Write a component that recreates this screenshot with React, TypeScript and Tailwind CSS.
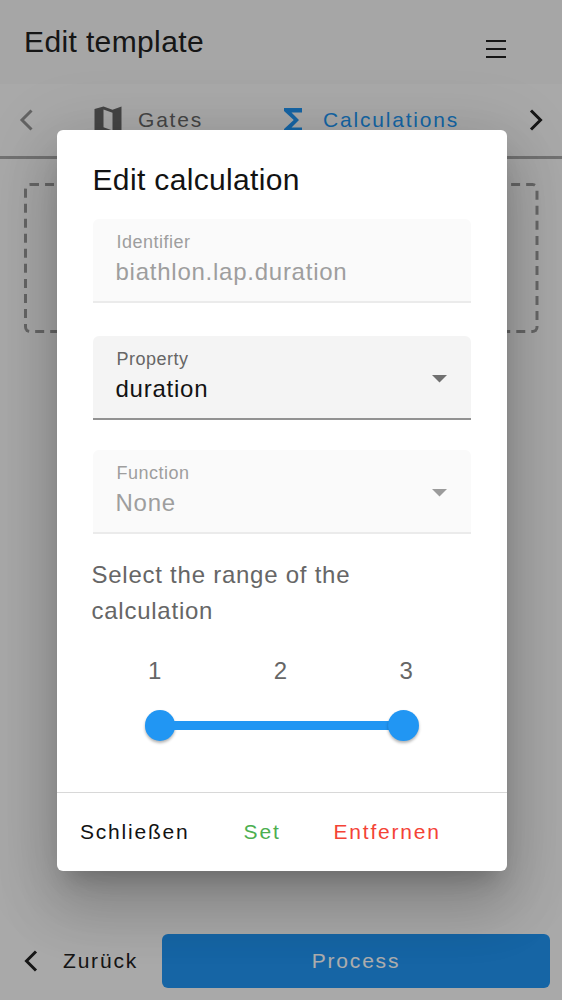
import { useState } from "react";
import type { ReactNode } from "react";
import { MdFunctions } from "react-icons/md";

const STEPS = [1, 2, 3];

type FieldProps = {
  label: string;
  value: string;
  disabled?: boolean;
  select?: boolean;
};

function Field({ label, value, disabled = false, select = false }: FieldProps) {
  return (
    <div
      className={
        disabled
          ? "flex h-[84px] items-center rounded-t-md border-b-2 border-[#ebebeb] bg-[#fafafa] px-6 text-[#9e9e9e]"
          : "flex h-[84px] items-center rounded-t-md border-b-2 border-[#929292] bg-[#f4f4f4] px-6 text-[#121212]"
      }
    >
      <div className="flex-1 pb-0.5">
        <div
          className={
            disabled
              ? "text-[18px] leading-[26px] tracking-[0.5px]"
              : "text-[18px] leading-[26px] tracking-[0.5px] text-[#666]"
          }
        >
          {label}
        </div>
        <div className="-ml-px text-2xl leading-[34px] tracking-[0.75px]">{value}</div>
      </div>
      {select && (
        <svg
          width="15"
          height="8"
          viewBox="0 0 15 8"
          className={disabled ? "mt-[3px] fill-[#9b9b9b]" : "mt-[3px] fill-[#707070]"}
        >
          <path d="M0 0h15L7.5 7.5z" />
        </svg>
      )}
    </div>
  );
}

function Chevron({ d, className }: { d: string; className: string }) {
  return (
    <svg width="16" height="24" viewBox="0 0 16 24" fill="none" strokeWidth="3" className={className}>
      <path d={d} />
    </svg>
  );
}

function MapIcon() {
  return (
    <svg width="36" height="36" viewBox="0 0 24 24" fill="currentColor">
      <path fillRule="evenodd" d="M3 4.7 9 3l6 2.1L21 3v16.2L15 21l-6-2.1L3 21zM9 5v11.9l6 2.1V7.1z" />
    </svg>
  );
}

function Tab({ icon, children }: { icon: ReactNode; children: ReactNode }) {
  return (
    <div className="flex items-center gap-3 text-[21px] tracking-[1.8px]">
      {icon}
      <span>{children}</span>
    </div>
  );
}

function Dialog() {
  const [range] = useState([1, 3]);

  return (
    <section
      role="dialog"
      aria-labelledby="dialog-title"
      className="absolute left-[57px] top-[130.4px] flex h-[740.4px] w-[449.6px] flex-col rounded-md bg-white shadow-[0_16.5px_22.5px_-10.5px_rgba(0,0,0,0.2),0_36px_57px_4.5px_rgba(0,0,0,0.14),0_13.5px_69px_12px_rgba(0,0,0,0.12)]"
    >
      <div className="flex-1 pl-[35.5px] pr-9 pt-8">
        <h2 id="dialog-title" className="text-[30px] leading-9 tracking-[0.35px] text-[#121212]">
          Edit calculation
        </h2>
        <div className="mt-[21px]">
          <Field label="Identifier" value="biathlon.lap.duration" disabled />
        </div>
        <div className="mt-[33px]">
          <Field label="Property" value="duration" select />
        </div>
        <div className="mt-[30px]">
          <Field label="Function" value="None" select disabled />
        </div>
        <p className="-ml-px mt-[23px] text-2xl leading-9 tracking-[0.75px] text-[#666]">
          Select the range of the calculation
        </p>
        <div className="mt-6 flex justify-between pl-[55.5px] pr-[57px] text-2xl leading-9 tracking-[0.75px] text-[#666]">
          {STEPS.map((step) => (
            <span key={step}>{step}</span>
          ))}
        </div>
        <div className="ml-[52px] mt-[21px] flex w-[274px] items-center" aria-label={range.join(" - ")}>
          <span className="size-[30.5px] shrink-0 rounded-full bg-[#2196f3] shadow-[0_2px_3px_rgba(0,0,0,0.3)]" />
          <span className="-mx-1 h-[9px] flex-1 bg-[#2196f3]" />
          <span className="size-[30.5px] shrink-0 rounded-full bg-[#2196f3] shadow-[0_2px_3px_rgba(0,0,0,0.3)]" />
        </div>
      </div>
      <footer className="flex h-[79px] items-center border-t border-[#d8d8d8] pl-[23px] text-[21px] tracking-[1.8px]">
        <button className="mr-[54px] text-[#121212]">Schließen</button>
        <button className="mr-[53px] text-[#4caf50]">Set</button>
        <button className="text-[#f44336]">Entfernen</button>
      </footer>
    </section>
  );
}

export default function App() {
  return (
    <div className="relative flex h-[1000px] w-[562px] flex-col overflow-hidden bg-[#fafafa] font-['Liberation_Sans',Arial,sans-serif] text-[#212121]">
      <header className="flex h-[84px] items-center justify-between bg-[#f5f5f5] pl-6 pr-14">
        <h1 className="-mt-0.5 text-[30px] tracking-[0.375px]">Edit template</h1>
        <svg width="20" height="20" viewBox="0 0 20 20" className="mt-3.5" stroke="currentColor" strokeWidth="2">
          <path d="M0 2h20M0 10h20M0 18h20" />
        </svg>
      </header>

      <nav className="flex h-[75px] items-center border-b-[3px] border-[#a8a8a8]">
        <Chevron d="M13.5 2.5 4 12l9.5 9.5" className="ml-[18px] mr-14 stroke-[#939393]" />
        <div className="w-[185px] text-[#666]">
          <Tab icon={<MapIcon />}>Gates</Tab>
        </div>
        <div className="flex-1 text-[#2196f3]">
          <Tab icon={<MdFunctions size={36} />}>Calculations</Tab>
        </div>
        <Chevron d="M3 2.5 12.5 12 3 21.5" className="mr-[18px] stroke-[#212121]" />
      </nav>

      <main className="flex-1 px-6 pt-6">
        {/* 2px dashes drawn at 1.5x, so the dash pattern scales with the outline */}
        <div className="h-[99.7px] w-[343px] origin-top-left scale-150 rounded border-2 border-dashed border-[#999]" />
      </main>

      <footer className="flex h-[66px] items-start pl-[23px] pr-3 text-[21px] tracking-[1.8px]">
        <div className="flex h-[54px] w-[139px] items-center">
          <Chevron d="M13 2.5 3.5 12l9.5 9.5" className="mr-6 stroke-[#212121]" />
          Zurück
        </div>
        <button className="h-[54px] flex-1 rounded-md bg-[#2196f3] text-white">Process</button>
      </footer>

      <div className="absolute inset-0 bg-black/32" />
      <Dialog />
    </div>
  );
}
